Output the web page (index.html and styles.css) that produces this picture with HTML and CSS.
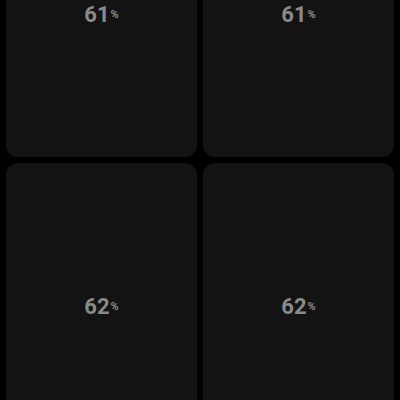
FILE: index.html
```html
<!DOCTYPE html>
<html lang="en">
<head>
    <meta charset="UTF-8" />
    <meta name="viewport" content="width=device-width, initial-scale=1.0" />
    <title>Battery tiles</title>
    <link rel="stylesheet" href="styles.css">
</head>
<body>
    <div class="grid">
        <div class="tile"><span class="value">61</span><span class="unit">%</span></div>
        <div class="tile"><span class="value">61</span><span class="unit">%</span></div>
        <div class="tile"><span class="value">62</span><span class="unit">%</span></div>
        <div class="tile"><span class="value">62</span><span class="unit">%</span></div>
    </div>
</body>
</html>
```

FILE: styles.css
```css
/* Page */
body {
    margin: 0;
    background-color: #000;
    font-family: Roboto, "Liberation Sans", sans-serif;
    overflow: hidden;
    height: 400px;
}

/* Two column grid of tiles, scrolled so the first row is cut off */
.grid {
    display: grid;
    grid-template-columns: 1fr 1fr;
    gap: 6px;
    padding: 0 6px;
    margin-top: -129px;
}

.tile {
    height: 286px;
    background-color: #131313;
    border-radius: 12px;
    display: flex;
    align-items: center;
    justify-content: center;
    color: #8a8a8a;
}

.value {
    font-size: 22px;
    font-weight: bold;
}

.unit {
    font-size: 11px;
    font-weight: bold;
    margin-top: 1px;
    margin-left: 1px;
}
```
